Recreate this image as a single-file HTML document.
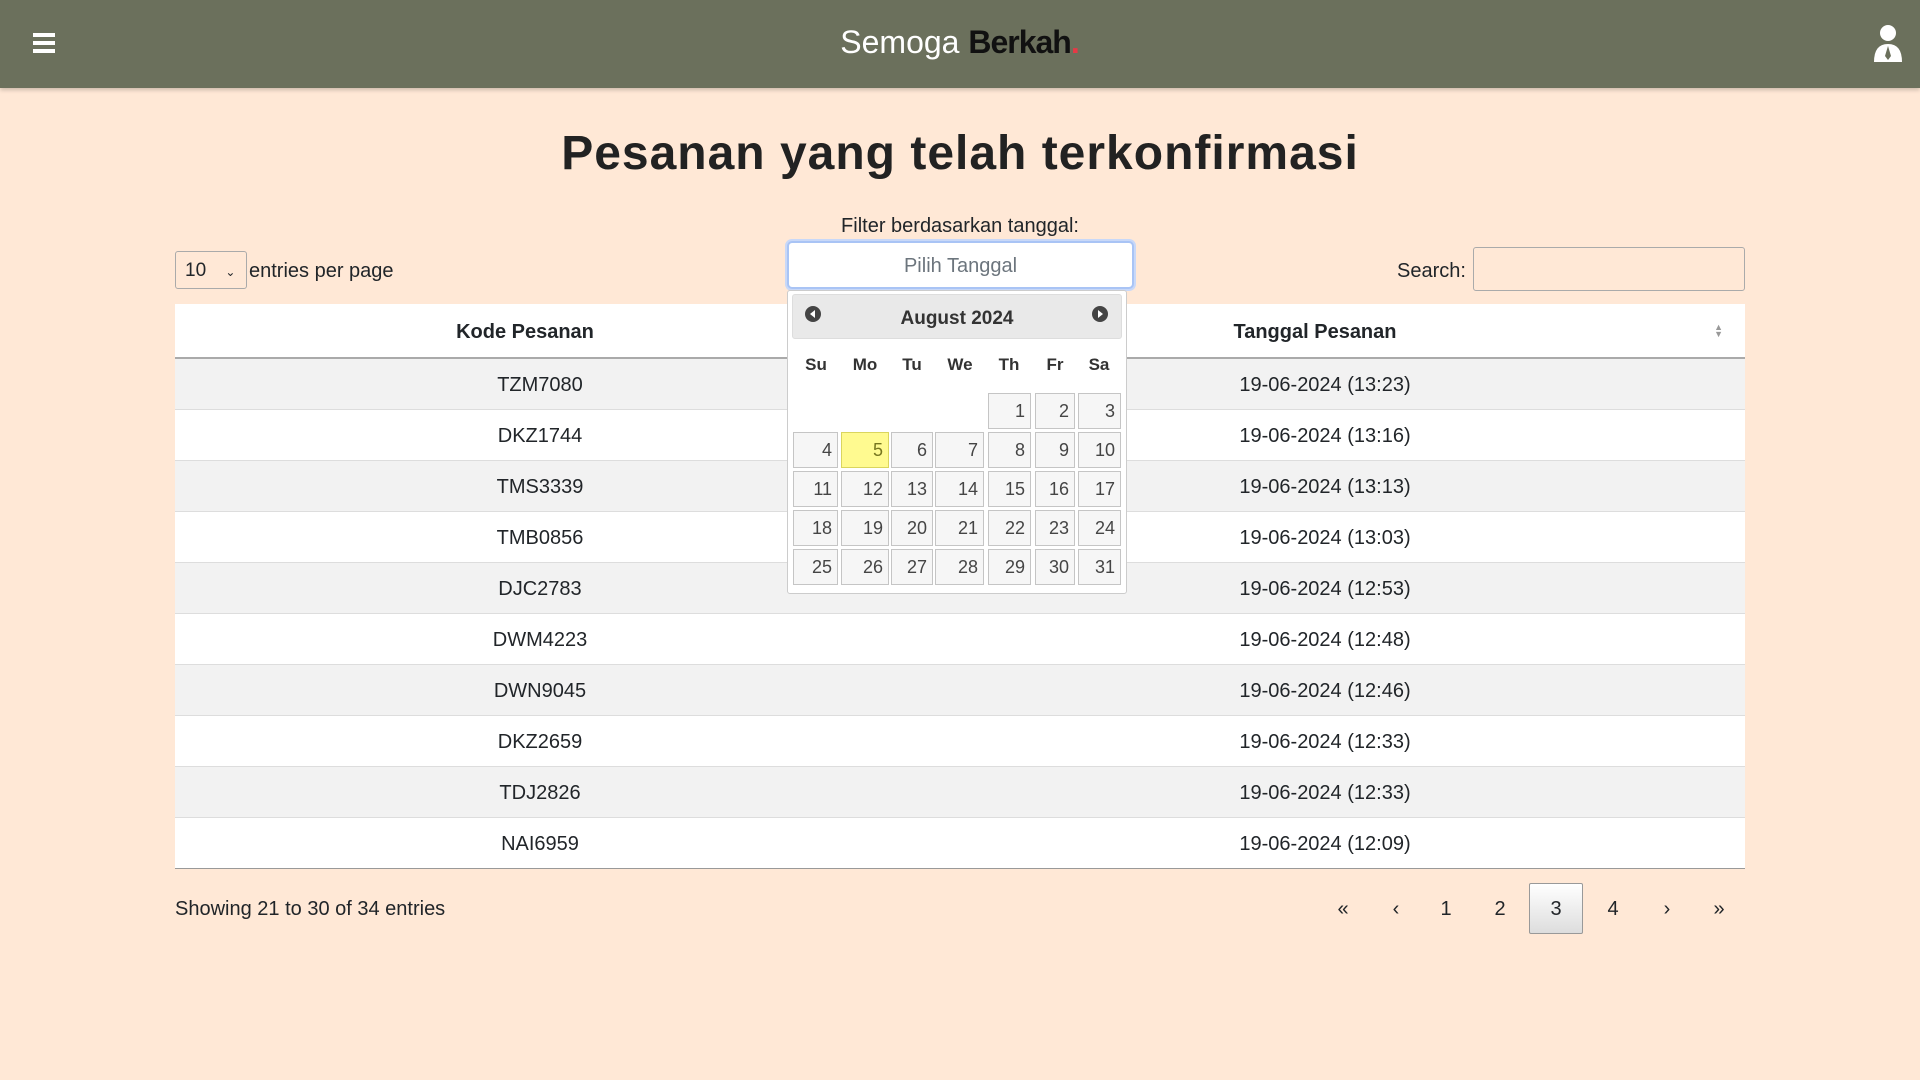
<!DOCTYPE html>
<html><head><meta charset="utf-8"><style>
*{box-sizing:border-box;margin:0;padding:0}
body{width:1920px;height:1080px;background:#ffe8d6;font-family:"Liberation Sans",sans-serif;color:#212529;position:relative;overflow:hidden}
.hdr{position:absolute;left:0;top:0;width:1920px;height:88px;background:#6b705c;box-shadow:0 2px 4px rgba(0,0,0,.2)}
.ab{position:absolute}
.tbl{position:absolute;left:175px;top:304px;width:1570px}
.row{height:51px;display:flex;align-items:center;border-bottom:1px solid #ddd;font-size:20px;padding-top:3px}
.row:nth-child(odd){background:#f2f2f2}.row:nth-child(even){background:#fff}
.c1{width:730px;text-align:center}.c2{width:840px;text-align:center}
.cal{position:absolute;left:787px;top:290px;width:340px;height:304px;background:#fff;border:1px solid #ccc;border-radius:3px}
.cell{position:absolute;background:#f6f6f6;border:1px solid #c5c5c5;text-align:right;padding-right:5px;font-size:18px;color:#454545;line-height:34px}
.dn{position:absolute;top:355px;font-weight:bold;font-size:17px;color:#333;width:40px;text-align:center}
.pg{position:absolute;top:898px;font-size:20px;width:40px;text-align:center}
</style></head><body>
<div class="hdr">
 <div class="ab" style="left:33px;top:33px;width:22px;height:4px;background:#fff;box-shadow:0 8px 0 #fff,0 16px 0 #fff"></div>
 <div class="ab" style="left:0;width:1920px;top:24px;text-align:center;font-size:32px;color:#fff">Semoga <b style="color:#111;letter-spacing:-1px">Berkah</b><span style="color:#e63946;font-weight:bold">.</span></div>
 <svg class="ab" style="left:1872px;top:24px" width="32" height="40" viewBox="0 0 32 40"><circle cx="16" cy="9" r="8" fill="#fff"/><path d="M2 38 Q2 20 16 20 Q30 20 30 38 Z" fill="#fff"/><path d="M16 22 L13 32 L16 36 L19 32 Z" fill="#6b705c"/></svg>
</div>
<div class="ab" style="left:0;width:1920px;top:126px;text-align:center;font-size:48px;font-weight:bold;color:#222;letter-spacing:1px">Pesanan yang telah terkonfirmasi</div>
<div class="ab" style="left:0;width:1920px;top:215px;text-align:center;font-size:20px">Filter berdasarkan tanggal:</div>
<div class="ab" style="left:787px;top:241px;width:347px;height:48px;background:#fff;border:2px solid #a9c4f5;border-radius:5px;box-shadow:0 0 0 2px #c8d8f8;text-align:center;line-height:46px;font-size:20px;color:#6c757d">Pilih Tanggal</div>
<div class="ab" style="left:175px;top:251px;width:72px;height:38px;border:1px solid #aaa;border-radius:3px;font-size:19px;line-height:38px;padding-left:9px">10 <span style="font-size:12px;margin-left:14px">&#8964;</span></div>
<div class="ab" style="left:249px;top:260px;font-size:20px">entries per page</div>
<div class="ab" style="left:1397px;top:260px;font-size:20px">Search:</div>
<div class="ab" style="left:1473px;top:247px;width:272px;height:44px;border:1px solid #aaa;border-radius:3px"></div>
<div class="tbl">
 <div style="height:55px;background:#fff;display:flex;align-items:center;font-weight:bold;font-size:20px;border-bottom:2px solid #aaa;padding-top:4px"><div class="c1" style="padding-right:30px">Kode Pesanan</div><div class="c2" style="padding-right:20px">Tanggal Pesanan</div><span class="ab" style="right:22px;top:20px;font-size:9px;color:#999;line-height:7px">▲<br>▼</span></div>
 <div>
 <div class="row"><div class="c1">TZM7080</div><div class="c2">19-06-2024 (13:23)</div></div>
 <div class="row"><div class="c1">DKZ1744</div><div class="c2">19-06-2024 (13:16)</div></div>
 <div class="row"><div class="c1">TMS3339</div><div class="c2">19-06-2024 (13:13)</div></div>
 <div class="row"><div class="c1">TMB0856</div><div class="c2">19-06-2024 (13:03)</div></div>
 <div class="row"><div class="c1">DJC2783</div><div class="c2">19-06-2024 (12:53)</div></div>
 <div class="row"><div class="c1">DWM4223</div><div class="c2">19-06-2024 (12:48)</div></div>
 <div class="row"><div class="c1">DWN9045</div><div class="c2">19-06-2024 (12:46)</div></div>
 <div class="row"><div class="c1">DKZ2659</div><div class="c2">19-06-2024 (12:33)</div></div>
 <div class="row"><div class="c1">TDJ2826</div><div class="c2">19-06-2024 (12:33)</div></div>
 <div class="row" style="border-bottom:1px solid #999"><div class="c1">NAI6959</div><div class="c2">19-06-2024 (12:09)</div></div>
 </div>
</div>
<div class="cal"></div>
<div class="ab" style="left:792px;top:294px;width:330px;height:45px;background:#e9e9e9;border:1px solid #ddd;border-radius:3px;text-align:center;line-height:47px;font-weight:bold;font-size:19px;color:#333">August 2024</div>
<svg class="ab" style="left:805px;top:306px" width="16" height="16"><circle cx="8" cy="8" r="8" fill="#444"/><path d="M10 4 L5 8 L10 12Z" fill="#fff"/></svg>
<svg class="ab" style="left:1092px;top:306px" width="16" height="16"><circle cx="8" cy="8" r="8" fill="#444"/><path d="M6 4 L11 8 L6 12Z" fill="#fff"/></svg>
<div class="dn" style="left:796px">Su</div><div class="dn" style="left:845px">Mo</div><div class="dn" style="left:892px">Tu</div><div class="dn" style="left:940px">We</div><div class="dn" style="left:989px">Th</div><div class="dn" style="left:1035px">Fr</div><div class="dn" style="left:1079px">Sa</div>
<div id="days"></div>
<script>
var xs=[[793,838],[841,889],[891,933],[935,984],[988,1031],[1035,1075],[1078,1121]],ys=[393,432,471,510,549],h='',d=1;
for(var r=0;r<5;r++)for(var c=0;c<7;c++){if(r==0&&c<4)continue;if(d>31)break;
var st=d==5?'background:#fffa90;border-color:#dad55e;color:#777620;':'';
h+='<div class="cell" style="'+st+'left:'+xs[c][0]+'px;top:'+ys[r]+'px;width:'+(xs[c][1]-xs[c][0])+'px;height:36px">'+d+'</div>';d++;}
document.getElementById('days').innerHTML=h;
</script>
<div class="ab" style="left:175px;top:898px;font-size:20px">Showing 21 to 30 of 34 entries</div>
<div class="ab" style="left:1529px;top:883px;width:54px;height:51px;border:1px solid #999;border-radius:2px;background:linear-gradient(#fff,#ddd)"></div>
<div class="pg" style="left:1323px">«</div><div class="pg" style="left:1376px">‹</div><div class="pg" style="left:1426px">1</div><div class="pg" style="left:1480px">2</div><div class="pg" style="left:1536px">3</div><div class="pg" style="left:1593px">4</div><div class="pg" style="left:1647px">›</div><div class="pg" style="left:1699px">»</div>
</body></html>
